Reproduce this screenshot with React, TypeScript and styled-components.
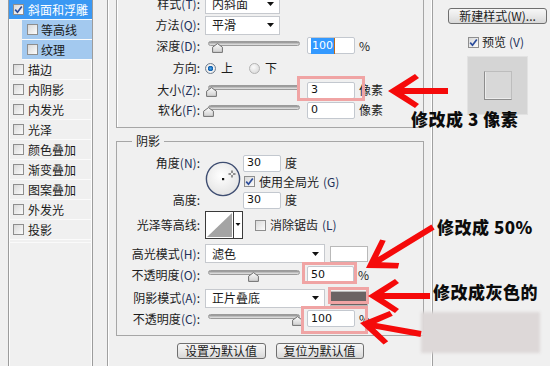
import React from 'react';
import styled, { createGlobalStyle } from 'styled-components';

const FONT = `"Noto Sans CJK SC", "Noto Sans", sans-serif`;

const Global = createGlobalStyle`
  html, body { margin: 0; padding: 0; background: #f0f0f0; }
  body { overflow: hidden; }
`;

const Page = styled.div`
  position: relative;
  width: 550px;
  height: 366px;
  overflow: hidden;
  display: flex;
  background: #f0f0f0;
  font-family: ${FONT};
  font-size: 12px;
  line-height: 16px;
  color: #1c1c1c;
`;

/* ---------- left list ---------- */
const LeftCol = styled.div`
  width: 93px;
  flex: none;
  padding-left: 8px;
  box-sizing: border-box;
`;

const ListBox = styled.div`
  height: 100%;
  border-left: 1px solid #9c9c9c;
  border-right: 1px solid #9c9c9c;
  box-shadow: inset 1px 0 #fdfdfd, inset -1px 0 #fdfdfd;
  display: flex;
  flex-direction: column;
`;

const ListItem = styled.div<{ $sub?: boolean; $sel?: boolean }>`
  height: 20px;
  flex: none;
  box-sizing: border-box;
  border-bottom: 1px solid #fbfbfb;
  margin-left: ${p => (p.$sub ? 13 : 0)}px;
  padding-left: ${p => (p.$sub ? 5 : 4)}px;
  display: flex;
  align-items: center;
  gap: ${p => (p.$sub ? 3 : 4)}px;
  background: ${p => (p.$sel ? '#3a98f3' : p.$sub ? '#a3c9ef' : 'transparent')};
  color: ${p => (p.$sel ? '#fff' : '#1a1a1a')};
  white-space: nowrap;
`;

const ListFill = styled.div`
  flex: 1;
  margin-top: 2px;
  border-top: 1px solid #fafafa;
`;

const CheckBox = styled.span`
  width: 11px;
  height: 11px;
  flex: none;
  box-sizing: border-box;
  border: 1px solid #8e8e8e;
  background: linear-gradient(135deg, #d9d9d9, #fbfbfb);
  display: inline-flex;
  align-items: center;
  justify-content: center;
`;

const Check: React.FC<{ checked?: boolean }> = ({ checked }) => (
  <CheckBox>
    {checked && (
      <svg width="9" height="9" viewBox="0 0 9 9">
        <path d="M1.2 4.6 L3.5 7.2 L7.8 1.4" fill="none" stroke="#2b4c9b" strokeWidth="1.7" />
      </svg>
    )}
  </CheckBox>
);

/* ---------- middle ---------- */
const MiddleCol = styled.div`
  width: 340px;
  flex: none;
  padding-left: 14px;
  box-sizing: border-box;
  display: flex;
`;

const OuterGroup = styled.div`
  flex: 1;
  border-left: 1px solid #a0a0a0;
  border-right: 1px solid #a0a0a0;
  box-shadow: inset 1px 0 #fff, inset -1px 0 #fff;
  padding: 0 8px;
  display: flex;
  flex-direction: column;
`;

const StructGroup = styled.div`
  margin-top: -8px;
  border: 1px solid #a6a6a6;
  box-shadow: inset 1px 1px #fff;
  padding-bottom: 7px;
`;

const ShadowSet = styled.fieldset`
  margin: 5px 0 0 0;
  padding: 5px 0 6px 0;
  border: 1px solid #a6a6a6;
  min-width: 0;
`;

const Legend = styled.legend`
  margin-left: 15px;
  padding: 0 4px;
  font-size: 12px;
  line-height: 16px;
`;

const Row = styled.div<{ $h: number; $mt?: number }>`
  display: flex;
  align-items: center;
  height: ${p => p.$h}px;
  margin-top: ${p => p.$mt ?? 0}px;
`;

const Label = styled.div`
  width: 83px;
  margin-right: 5px;
  flex: none;
  text-align: right;
  white-space: nowrap;
`;

const Mn = styled.span`
  color: #22315a;
`;

const Select = styled.div<{ $w: number }>`
  width: ${p => p.$w}px;
  height: 19px;
  flex: none;
  box-sizing: border-box;
  border: 1px solid #c6c9ce;
  background: #fff;
  display: flex;
  align-items: center;
  justify-content: space-between;
  padding: 0 5px 0 6px;
`;

const Caret = () => (
  <svg width="7" height="4" viewBox="0 0 7 4">
    <path d="M0 0h7L3.5 4z" fill="#111" />
  </svg>
);

const SliderBox = styled.div`
  position: relative;
  width: 92px;
  height: 14px;
  margin-left: 3px;
  flex: none;
`;

const Track = styled.div`
  margin-top: 2px;
  height: 5px;
  box-sizing: border-box;
  border-radius: 3px;
  border: 1px solid #9b9b9b;
  background: linear-gradient(#8d8d8d, #c9c9c9 60%, #e6e6e6);
`;

const Thumb = styled.svg`
  position: absolute;
  top: 4px;
  margin-left: -5px;
`;

const Slider: React.FC<{ pos: number }> = ({ pos }) => (
  <SliderBox>
    <Track />
    <Thumb width="11" height="10" viewBox="0 0 11 10" style={{ left: `${pos}%` }}>
      <defs>
        <linearGradient id="tg" x1="0" y1="0" x2="0" y2="1">
          <stop offset="0" stopColor="#fdfdfd" />
          <stop offset="1" stopColor="#cfcfcf" />
        </linearGradient>
      </defs>
      <path d="M5.5 0.6 L10.4 4.2 V9.4 H0.6 V4.2 Z" fill="url(#tg)" stroke="#707070" />
    </Thumb>
  </SliderBox>
);

const Input = styled.div<{ $w: number; $ml?: number }>`
  width: ${p => p.$w}px;
  height: 17px;
  flex: none;
  margin-left: ${p => p.$ml ?? 0}px;
  box-sizing: border-box;
  border: 1px solid #c3c8cf;
  border-radius: 2px;
  background: #fff;
  padding-left: 3px;
  display: flex;
  align-items: center;
  font-family: "DejaVu Sans", sans-serif;
  font-size: 11px;
  color: #111;
`;

const Selected = styled.span`
  background: #3399ff;
  color: #fff;
  padding: 0 1px;
  border-right: 1px solid #c26a1a;
`;

const Unit = styled.span`
  margin-left: 4px;
  white-space: nowrap;
`;

const RadioDot = styled.span<{ $on?: boolean }>`
  width: 11px;
  height: 11px;
  flex: none;
  box-sizing: border-box;
  border-radius: 50%;
  border: 1px solid ${p => (p.$on ? '#6f7d8e' : '#b3b3b3')};
  background: ${p =>
    p.$on
      ? 'radial-gradient(circle, #4aa8ee 0, #0d5aa8 2.5px, #f4f4f4 3px, #dcdcdc 100%)'
      : 'radial-gradient(circle at 40% 35%, #fafafa, #d4d4d4)'};
`;

const RadioText = styled.span<{ $mr?: number }>`
  margin-left: 5px;
  margin-right: ${p => p.$mr ?? 0}px;
`;

const AngleGrid = styled.div`
  display: grid;
  grid-template-columns: 88px 38px auto;
  grid-template-rows: 18px 19px 18px;
  align-items: center;
`;

const GridLabel = styled.div<{ $row: number }>`
  grid-column: 1;
  grid-row: ${p => p.$row};
  text-align: right;
  padding-right: 5px;
  white-space: nowrap;
`;

const GridCell = styled.div<{ $row: number }>`
  grid-column: 3;
  grid-row: ${p => p.$row};
  display: flex;
  align-items: center;
`;

const Dial = styled.svg`
  grid-column: 2;
  grid-row: 1 / 4;
  align-self: start;
  margin-top: 7px;
`;

const CheckLabel = styled.span<{ $ml?: number }>`
  display: flex;
  align-items: center;
  gap: 4px;
  margin-left: ${p => p.$ml ?? 0}px;
  white-space: nowrap;
`;

const Swatch = styled.div<{ $color: string; $h: number }>`
  width: 38px;
  height: ${p => p.$h}px;
  margin-left: 5px;
  flex: none;
  box-sizing: border-box;
  border: 1px solid #b9b9b9;
  background: ${p => p.$color};
`;

const ButtonRow = styled.div`
  margin-top: 7px;
  display: flex;
  justify-content: center;
  gap: 10px;
`;

const Button = styled.div<{ $w: number }>`
  width: ${p => p.$w}px;
  height: 16px;
  box-sizing: border-box;
  border: 1px solid #6f6f6f;
  border-radius: 3px;
  background: linear-gradient(#f7f7f7, #e9e9e9 50%, #d8d8d8);
  display: flex;
  align-items: center;
  justify-content: center;
  font-size: 12px;
  line-height: 14px;
  white-space: nowrap;
`;

/* ---------- right column ---------- */
const RightCol = styled.div`
  flex: 1;
  padding: 8px 0 0 15px;
  display: flex;
  flex-direction: column;
`;

const PreviewRow = styled.div`
  margin: 10px 0 0 20px;
  display: flex;
  align-items: center;
  gap: 3px;
`;

const PreviewBox = styled.div`
  width: 61px;
  height: 59px;
  margin: 6px 0 0 19px;
  box-sizing: border-box;
  background: #d5d5d5;
  border: 1px solid #e2e2e2;
  display: flex;
  align-items: center;
  justify-content: center;
`;

const PreviewSquare = styled.div`
  width: 28px;
  height: 29px;
  box-sizing: border-box;
  background: #d8d8d8;
  border-left: 1px solid #8d8d8d;
  border-bottom: 1px solid #8d8d8d;
  border-top: 1px solid #bdbdbd;
  border-right: 1px solid #bdbdbd;
  box-shadow: inset 1px -1px #ececec;
`;

/* ---------- annotations (overlay) ---------- */
const Overlay = styled.div`
  position: absolute;
  inset: 0;
  pointer-events: none;
`;

const PinkBox = styled.div<{ $x: number; $y: number; $w: number; $h: number }>`
  position: absolute;
  left: ${p => p.$x}px;
  top: ${p => p.$y}px;
  width: ${p => p.$w}px;
  height: ${p => p.$h}px;
  box-sizing: border-box;
  border: 3px solid #f0a4a4;
`;

const Caption = styled.div<{ $x: number; $y: number }>`
  position: absolute;
  left: ${p => p.$x}px;
  top: ${p => p.$y}px;
  font-family: ${FONT};
  font-weight: 900;
  font-size: 17px;
  line-height: 20px;
  color: #0c0c0c;
  white-space: nowrap;
  letter-spacing: 0.5px;
`;

const Blur = styled.div`
  position: absolute;
  left: 421px;
  top: 312px;
  width: 119px;
  height: 41px;
  background: #ddd8d8;
  filter: blur(1.5px);
`;

const ArrowLayer = styled.svg`
  position: absolute;
  left: 0;
  top: 0;
`;

function arrowPoints(tx: number, ty: number, sx: number, sy: number): string {
  const dx = sx - tx;
  const dy = sy - ty;
  const L = Math.hypot(dx, dy);
  const ux = dx / L;
  const uy = dy / L;
  const nx = -uy;
  const ny = ux;
  const p = (a: number, b: number) => `${(tx + ux * a + nx * b).toFixed(1)},${(ty + uy * a + ny * b).toFixed(1)}`;
  return [p(0, 0), p(27, 17), p(31, 13), p(16, 3), p(L, 3), p(L, -3), p(16, -3), p(31, -13), p(27, -17)].join(' ');
}

const arrows: [number, number, number, number][] = [
  [388, 91, 448, 91],
  [366, 268, 433, 227],
  [368, 296, 430, 296],
  [360, 323, 421, 334],
];

const listItems: { t: string; sub?: boolean; sel?: boolean; c?: boolean }[] = [
  { t: '斜面和浮雕', sel: true, c: true },
  { t: '等高线', sub: true },
  { t: '纹理', sub: true },
  { t: '描边' },
  { t: '内阴影' },
  { t: '内发光' },
  { t: '光泽' },
  { t: '颜色叠加' },
  { t: '渐变叠加' },
  { t: '图案叠加' },
  { t: '外发光' },
  { t: '投影' },
];

export default function App() {
  return (
    <Page>
      <Global />
      <LeftCol>
        <ListBox>
          {listItems.map(it => (
            <ListItem key={it.t} $sub={it.sub} $sel={it.sel}>
              <Check checked={it.c} />
              {it.t}
            </ListItem>
          ))}
          <ListFill />
        </ListBox>
      </LeftCol>

      <MiddleCol>
        <OuterGroup>
          <StructGroup>
            <Row $h={22}>
              <Label>样式<Mn>(T)</Mn>:</Label>
              <Select $w={75}>内斜面<Caret /></Select>
            </Row>
            <Row $h={20}>
              <Label>方法<Mn>(Q)</Mn>:</Label>
              <Select $w={75}>平滑<Caret /></Select>
            </Row>
            <Row $h={21}>
              <Label>深度<Mn>(D)</Mn>:</Label>
              <Slider pos={10} />
              <Input $w={48} $ml={7}><Selected>100</Selected></Input>
              <Unit>%</Unit>
            </Row>
            <Row $h={24}>
              <Label>方向:</Label>
              <RadioDot $on />
              <RadioText $mr={16}>上</RadioText>
              <RadioDot />
              <RadioText>下</RadioText>
            </Row>
            <Row $h={20}>
              <Label>大小<Mn>(Z)</Mn>:</Label>
              <Slider pos={3} />
              <Input $w={48} $ml={7}>3</Input>
              <Unit>像素</Unit>
            </Row>
            <Row $h={20}>
              <Label>软化<Mn>(F)</Mn>:</Label>
              <Slider pos={0} />
              <Input $w={48} $ml={7}>0</Input>
              <Unit>像素</Unit>
            </Row>
          </StructGroup>

          <ShadowSet>
            <Legend>阴影</Legend>
            <AngleGrid>
              <GridLabel $row={1}>角度<Mn>(N)</Mn>:</GridLabel>
              <Dial width="36" height="36" viewBox="0 0 36 36">
                <defs>
                  <radialGradient id="dg" cx="0.45" cy="0.4" r="0.6">
                    <stop offset="0" stopColor="#ffffff" />
                    <stop offset="1" stopColor="#e4e4e4" />
                  </radialGradient>
                </defs>
                <circle cx="18" cy="18" r="16.6" fill="url(#dg)" stroke="#3f4e72" strokeWidth="1.4" />
                <rect x="17" y="17" width="2.2" height="2.2" fill="#111" />
                <path d="M27 9.5v2.5M27 14v2.5M23.5 13h2.5M28 13h2.5" stroke="#333" strokeWidth="1" />
              </Dial>
              <GridCell $row={1}>
                <Input $w={38}>30</Input>
                <Unit>度</Unit>
              </GridCell>
              <GridCell $row={2}>
                <CheckLabel $ml={1}><Check checked />使用全局光<Mn>(G)</Mn></CheckLabel>
              </GridCell>
              <GridLabel $row={3}>高度:</GridLabel>
              <GridCell $row={3}>
                <Input $w={38}>30</Input>
                <Unit>度</Unit>
              </GridCell>
            </AngleGrid>

            <Row $h={28} $mt={2}>
              <Label>光泽等高线:</Label>
              <svg width="38" height="28" viewBox="0 0 38 28">
                <rect x="0.5" y="0.5" width="37" height="27" fill="#fff" stroke="#3a3a3a" />
                <polygon points="2,26 27,2 27,26" fill="#a4a4a4" />
                <line x1="28.5" y1="1" x2="28.5" y2="27" stroke="#3a3a3a" />
                <path d="M30.5 12h5l-2.5 3z" fill="#111" />
              </svg>
              <CheckLabel $ml={12}><Check />消除锯齿<Mn>(L)</Mn></CheckLabel>
            </Row>

            <Row $h={21} $mt={4}>
              <Label>高光模式<Mn>(H)</Mn>:</Label>
              <Select $w={120}>滤色<Caret /></Select>
              <Swatch $color="#ffffff" $h={16} />
            </Row>
            <Row $h={21}>
              <Label>不透明度<Mn>(O)</Mn>:</Label>
              <Slider pos={49} />
              <Input $w={47} $ml={7}>50</Input>
              <Unit>%</Unit>
            </Row>
            <Row $h={20} $mt={3}>
              <Label>阴影模式<Mn>(A)</Mn>:</Label>
              <Select $w={120}>正片叠底<Caret /></Select>
              <Swatch $color="#6b6363" $h={15} />
            </Row>
            <Row $h={21}>
              <Label>不透明度<Mn>(C)</Mn>:</Label>
              <Slider pos={97} />
              <Input $w={48} $ml={7}>100</Input>
              <Unit>%</Unit>
            </Row>
          </ShadowSet>

          <ButtonRow>
            <Button $w={89}>设置为默认值</Button>
            <Button $w={88}>复位为默认值</Button>
          </ButtonRow>
        </OuterGroup>
      </MiddleCol>

      <RightCol>
        <Button $w={99}>新建样式(W)...</Button>
        <PreviewRow>
          <Check checked />
          预览<Mn>(V)</Mn>
        </PreviewRow>
        <PreviewBox>
          <PreviewSquare />
        </PreviewBox>
      </RightCol>

      <Overlay>
        <PinkBox $x={297} $y={76} $w={68} $h={25} />
        <PinkBox $x={302} $y={262} $w={55} $h={22} />
        <PinkBox $x={328} $y={287} $w={41} $h={17} />
        <PinkBox $x={301} $y={306} $w={67} $h={28} />
        <Blur />
        <ArrowLayer width="550" height="366" viewBox="0 0 550 366">
          {arrows.map((a, i) => (
            <polygon key={i} points={arrowPoints(a[0], a[1], a[2], a[3])} fill="#f50a0a" />
          ))}
        </ArrowLayer>
        <Caption $x={411} $y={109}>修改成 3 像素</Caption>
        <Caption $x={437} $y={217}>修改成 50%</Caption>
        <Caption $x={433} $y={282}>修改成灰色的</Caption>
      </Overlay>
    </Page>
  );
}
